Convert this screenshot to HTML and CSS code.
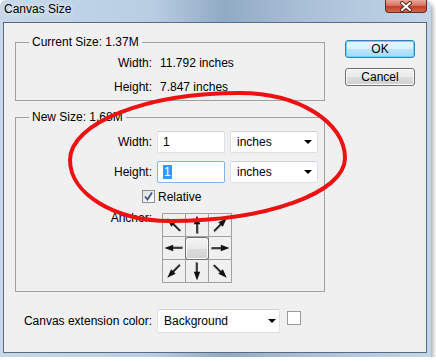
FILE: index.html
```html
<!DOCTYPE html>
<html>
<head>
  <title>Canvas Size</title>
  <link rel="stylesheet" href="styles.css">
</head>
<body>
  <div class="window">
    <div class="titlebar">
      <span class="title">Canvas Size</span>
      <div class="close">
        <svg width="14" height="11" viewBox="0 0 14 11">
          <path d="M3 2L11 9M11 2L3 9" stroke="#5a2a20" stroke-width="4" stroke-linecap="round"/>
          <path d="M3 2L11 9M11 2L3 9" stroke="#fff" stroke-width="2" stroke-linecap="round"/>
        </svg>
      </div>
    </div>

    <div class="client">
      <div class="content">
        <div class="main">
          <fieldset class="group current">
            <legend>Current Size: 1.37M</legend>
            <div class="info">
              <span class="label">Width:</span><span>11.792 inches</span>
              <span class="label">Height:</span><span>7.847 inches</span>
            </div>
          </fieldset>

          <fieldset class="group new">
            <legend>New Size: 1.68M</legend>
            <div class="fields">
              <span class="label">Width:</span>
              <div class="field">1</div>
              <div class="select">inches<span class="arrow"></span></div>
              <span class="label">Height:</span>
              <div class="field focus"><span class="sel">1</span></div>
              <div class="select">inches<span class="arrow"></span></div>
            </div>
            <div class="relative">
              <span class="check">
                <svg width="11" height="11" viewBox="0 0 11 11">
                  <path d="M2 5.5L4.5 8.5L9 1.5" fill="none" stroke="#3b5784" stroke-width="1.8"/>
                </svg>
              </span>
              Relative
            </div>
            <div class="anchor-row">
              <span class="label">Anchor:</span>
              <div class="anchor">
                <div class="cell"><svg viewBox="0 0 22 22"><use href="#arr" transform="rotate(-45 11 11)"/></svg></div>
                <div class="cell"><svg viewBox="0 0 22 22"><use href="#arr"/></svg></div>
                <div class="cell"><svg viewBox="0 0 22 22"><use href="#arr" transform="rotate(45 11 11)"/></svg></div>
                <div class="cell"><svg viewBox="0 0 22 22"><use href="#arr" transform="rotate(-90 11 11)"/></svg></div>
                <div class="cell mid"><div class="center-btn"></div></div>
                <div class="cell"><svg viewBox="0 0 22 22"><use href="#arr" transform="rotate(90 11 11)"/></svg></div>
                <div class="cell"><svg viewBox="0 0 22 22"><use href="#arr" transform="rotate(-135 11 11)"/></svg></div>
                <div class="cell"><svg viewBox="0 0 22 22"><use href="#arr" transform="rotate(180 11 11)"/></svg></div>
                <div class="cell"><svg viewBox="0 0 22 22"><use href="#arr" transform="rotate(135 11 11)"/></svg></div>
              </div>
            </div>
          </fieldset>

          <div class="ext">
            <span class="label">Canvas extension color:</span>
            <div class="select wide">Background<span class="arrow"></span></div>
            <span class="swatch"></span>
          </div>
        </div>

        <div class="buttons">
          <button class="btn default">OK</button>
          <button class="btn">Cancel</button>
        </div>
      </div>
    </div>

    <!-- red marker drawn over the screenshot -->
    <svg class="marker" width="436" height="362" viewBox="0 0 436 362">
      <path d="M240 93C298 93 345 122 345 158C345 193 266 221 170 221C115 221 70 194 70 160C70 123 146 93 240 93Z"
            fill="none" stroke="#ee1111" stroke-width="4"/>
    </svg>
  </div>

  <svg class="defs" width="0" height="0">
    <defs>
      <g id="arr">
        <path d="M12 20V9" stroke="#a0a0a0" stroke-width="1.4"/>
        <path d="M11 19.5V8" stroke="#111" stroke-width="1.5"/>
        <path d="M11 1.5L7.8 10.2H14.2Z" fill="#111"/>
      </g>
    </defs>
  </svg>
</body>
</html>
```

FILE: styles.css
```css
body {
  margin: 0;
  background: #fff;
  font-family: "Liberation Sans", Arial, sans-serif;
  font-size: 12px;
  color: #000;
}
.window {
  position: relative;
  width: 431px;
  height: 357px;
  display: flex;
  flex-direction: column;
  background: linear-gradient(90deg, #c6d8ea 0%, #b9cee3 35%, #91aac4 52%, #a9bfd6 70%, #c3d6e9 100%);
  border-radius: 6px 6px 0 0;
  box-shadow: 2px 3px 4px rgba(0, 0, 0, 0.35);
}
.titlebar {
  height: 22px;
  display: flex;
  justify-content: space-between;
  align-items: flex-start;
  padding: 0 4px 0 4px;
  line-height: 14px;
}
.title {
  margin-top: 2px;
  font-size: 12px;
  color: #000;
  text-shadow: 0 0 6px #fff;
}
.close {
  width: 42px;
  height: 13px;
  box-sizing: border-box;
  border: 1px solid #6e2b1e;
  border-top: none;
  border-radius: 0 0 4px 4px;
  background: linear-gradient(#e7a898, #d77460 45%, #c2412a 55%, #d0674e);
  display: flex;
  align-items: center;
  justify-content: center;
}
.client {
  flex: 1;
  margin: 0 4px 4px 3px;
  border: 1px solid #5b6b7e;
  background: #f0f0f0;
}
.content {
  display: flex;
  gap: 20px;
  padding: 12px 0 0 11px;
}
.main {
  width: 310px;
}
.group {
  margin: 0;
  padding: 0;
  min-width: 0;
  border: 1px solid #a0a0a0;
}
.group legend {
  margin-left: 13px;
  padding: 0 3px;
  line-height: 14px;
}
.label {
  text-align: right;
}
.info {
  display: grid;
  grid-template-columns: 136px auto;
  grid-auto-rows: 24px;
  column-gap: 8px;
  align-items: center;
  padding: 2px 0 1px;
}
.new {
  margin-top: 9px;
  padding: 7px 0 8px;
}
.fields {
  display: grid;
  grid-template-columns: 136px 68px 88px;
  grid-auto-rows: 22px;
  column-gap: 5px;
  row-gap: 8px;
  align-items: center;
}
.field,
.select {
  height: 22px;
  box-sizing: border-box;
  border: 1px solid #dde2e8;
  border-top-color: #ccd2d9;
  border-radius: 2px;
  background: #fff;
  display: flex;
  align-items: center;
  padding-left: 5px;
}
.field.focus {
  border-color: #7eb4ea;
}
.sel {
  background: #3399ff;
  color: #fff;
  padding: 0 1px;
}
.select {
  justify-content: space-between;
  padding: 0 5px 0 6px;
}
.arrow {
  width: 0;
  height: 0;
  border-left: 4px solid transparent;
  border-right: 4px solid transparent;
  border-top: 4px solid #000;
}
.relative {
  display: flex;
  align-items: center;
  gap: 3px;
  height: 13px;
  margin: 7px 0 0 126px;
}
.check {
  width: 13px;
  height: 13px;
  box-sizing: border-box;
  border: 1px solid #8e8f8f;
  background: linear-gradient(135deg, #dedede, #ffffff);
  display: flex;
  align-items: center;
  justify-content: center;
}
.anchor-row {
  display: flex;
  align-items: flex-start;
  gap: 10px;
  margin-top: 10px;
}
.anchor-row .label {
  width: 136px;
  margin-top: -2px;
}
.anchor {
  display: grid;
  grid-template-columns: repeat(3, 22px);
  grid-auto-rows: 22px;
  gap: 1px;
  border: 1px solid #a0a0a0;
  background: #a0a0a0;
}
.cell {
  background: #f0f0f0;
  display: flex;
  align-items: center;
  justify-content: center;
}
.cell svg {
  width: 22px;
  height: 22px;
}
.cell.mid {
  position: relative;
  z-index: 1;
}
.center-btn {
  width: 24px;
  height: 23px;
  flex: none;
  box-sizing: border-box;
  border: 1px solid #6f6f6f;
  border-radius: 3px;
  background: linear-gradient(#f4f4f4, #e9e9e9 50%, #dcdcdc 52%, #d2d2d2);
  box-shadow: inset 0 0 0 1px #fafafa;
}
.ext {
  display: flex;
  align-items: flex-start;
  gap: 5px;
  margin-top: 17px;
}
.ext .label {
  width: 137px;
  align-self: center;
}
.select.wide {
  width: 123px;
  height: 24px;
  padding-right: 3px;
}
.swatch {
  width: 14px;
  height: 14px;
  box-sizing: border-box;
  margin: 2px 0 0 2px;
  border: 1px solid #9a9a9a;
  background: #fff;
}
.buttons {
  display: flex;
  flex-direction: column;
  gap: 10px;
  padding-top: 5px;
}
.btn {
  width: 70px;
  height: 18px;
  padding: 0;
  font: inherit;
  color: #000;
  border: 1px solid #707070;
  border-radius: 3px;
  background: linear-gradient(#f2f2f2, #ebebeb 50%, #dddddd 52%, #cfcfcf);
  box-shadow: inset 0 0 0 1px #fcfcfc;
}
.btn.default {
  border-color: #3c7fb1;
  background: linear-gradient(#eaf6fd, #d9f0fc 50%, #bee6fd 52%, #a7d9f5);
  box-shadow: inset 0 0 0 1px #63d7f9;
}
.marker {
  position: absolute;
  top: 0;
  left: 0;
  pointer-events: none;
}
.defs {
  display: block;
}
```
